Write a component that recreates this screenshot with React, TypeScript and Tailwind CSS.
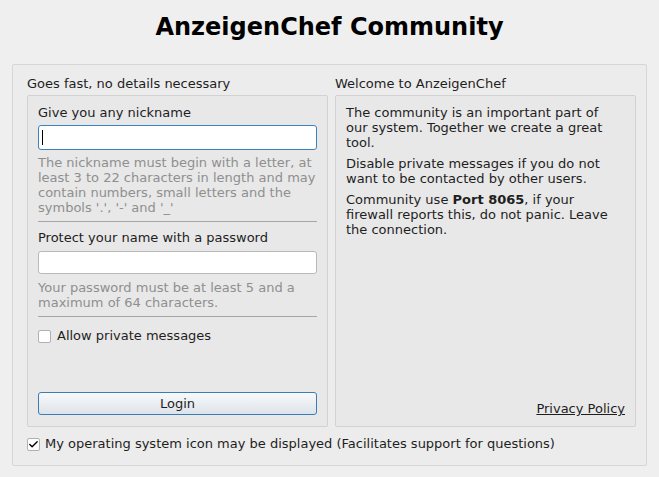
import { Check } from 'lucide-react';

function Hint({ children, className = '' }: { children: React.ReactNode; className?: string }) {
  return <p className={`text-[#8f8f8f] leading-[15px] ${className}`}>{children}</p>;
}

export default function App() {
  return (
    <div
      className="w-[659px] h-[477px] bg-[#efefef] text-[13px] text-[#1e1e1e] flex flex-col"
      style={{ fontFamily: '"DejaVu Sans", sans-serif' }}
    >
      <h1 className="text-center font-bold text-[24px] text-black leading-[30px] mt-[12px] mb-[22px]">
        AnzeigenChef Community
      </h1>

      <div className="mx-[12px] h-[402px] border border-[#d6d6d6] rounded-[2px] bg-[#ececec] pl-[14px] pr-[10px] pt-[11px] flex flex-col">
        <div className="flex gap-[7px] h-[351px]">
          {/* left column */}
          <div className="w-[301px] shrink-0 flex flex-col">
            <div className="leading-[16px] h-[19px] whitespace-nowrap">Goes fast, no details necessary</div>
            <div className="flex-1 border border-[#d2d2d2] rounded-[2px] bg-[#e8e8e8] px-[10px] pt-[9px] pb-[11px] flex flex-col">
              <div className="leading-[16px]">Give you any nickname</div>
              <div className="mt-[4px] h-[25px] bg-white border border-[#3b82c0] rounded-[3px] flex items-center px-[3px]">
                <span className="w-[1px] h-[15px] bg-black" />
              </div>
              <Hint className="mt-[5px]">
                The nickname must begin with a letter, at least 3 to 22 characters in length and may contain numbers, small letters and the symbols '.', '-' and '_'
              </Hint>
              <div className="mt-[6px] h-[1px] bg-[#a6a6a6]" />
              <div className="leading-[16px] mt-[8px]">Protect your name with a password</div>
              <div className="mt-[5px] h-[23px] bg-white border border-[#b9b9b9] rounded-[3px]" />
              <Hint className="mt-[6px]">Your password must be at least 5 and a maximum of 64 characters.</Hint>
              <div className="mt-[6px] h-[1px] bg-[#a6a6a6]" />
              <label className="flex items-center gap-[6px] mt-[11px] leading-[16px]">
                <span className="w-[13px] h-[13px] bg-white border border-[#b0b0b0] rounded-[2px]" />
                Allow private messages
              </label>
              <div className="flex-1" />
              <button className="h-[23px] w-full border border-[#3a7db6] rounded-[3px] bg-gradient-to-b from-[#f8f9fb] to-[#dde3ea] leading-[16px] text-[#1e1e1e]">
                Login
              </button>
            </div>
          </div>

          {/* right column */}
          <div className="w-[301px] shrink-0 flex flex-col">
            <div className="leading-[16px] h-[19px] whitespace-nowrap">Welcome to AnzeigenChef</div>
            <div className="flex-1 border border-[#d2d2d2] rounded-[2px] bg-[#e8e8e8] px-[10px] pt-[9px] pb-[10px] flex flex-col leading-[15px]">
              <div className="pr-[12px]">
                <p>The community is an important part of our system. Together we create a great tool.</p>
                <p className="mt-[6px]">Disable private messages if you do not want to be contacted by other users.</p>
                <p className="mt-[6px]">
                  Community use <b>Port 8065</b>, if your firewall reports this, do not panic. Leave the connection.
                </p>
              </div>
              <div className="flex-1" />
              <div className="text-right">
                <a className="underline">Privacy Policy</a>
              </div>
            </div>
          </div>
        </div>

        <label className="flex items-center gap-[5px] mt-[9px] leading-[16px] whitespace-nowrap">
          <span className="w-[13px] h-[13px] bg-white border border-[#b0b0b0] rounded-[2px] flex items-center justify-center">
            <Check size={11} strokeWidth={3} className="text-black" />
          </span>
          My operating system icon may be displayed (Facilitates support for questions)
        </label>
      </div>
    </div>
  );
}
